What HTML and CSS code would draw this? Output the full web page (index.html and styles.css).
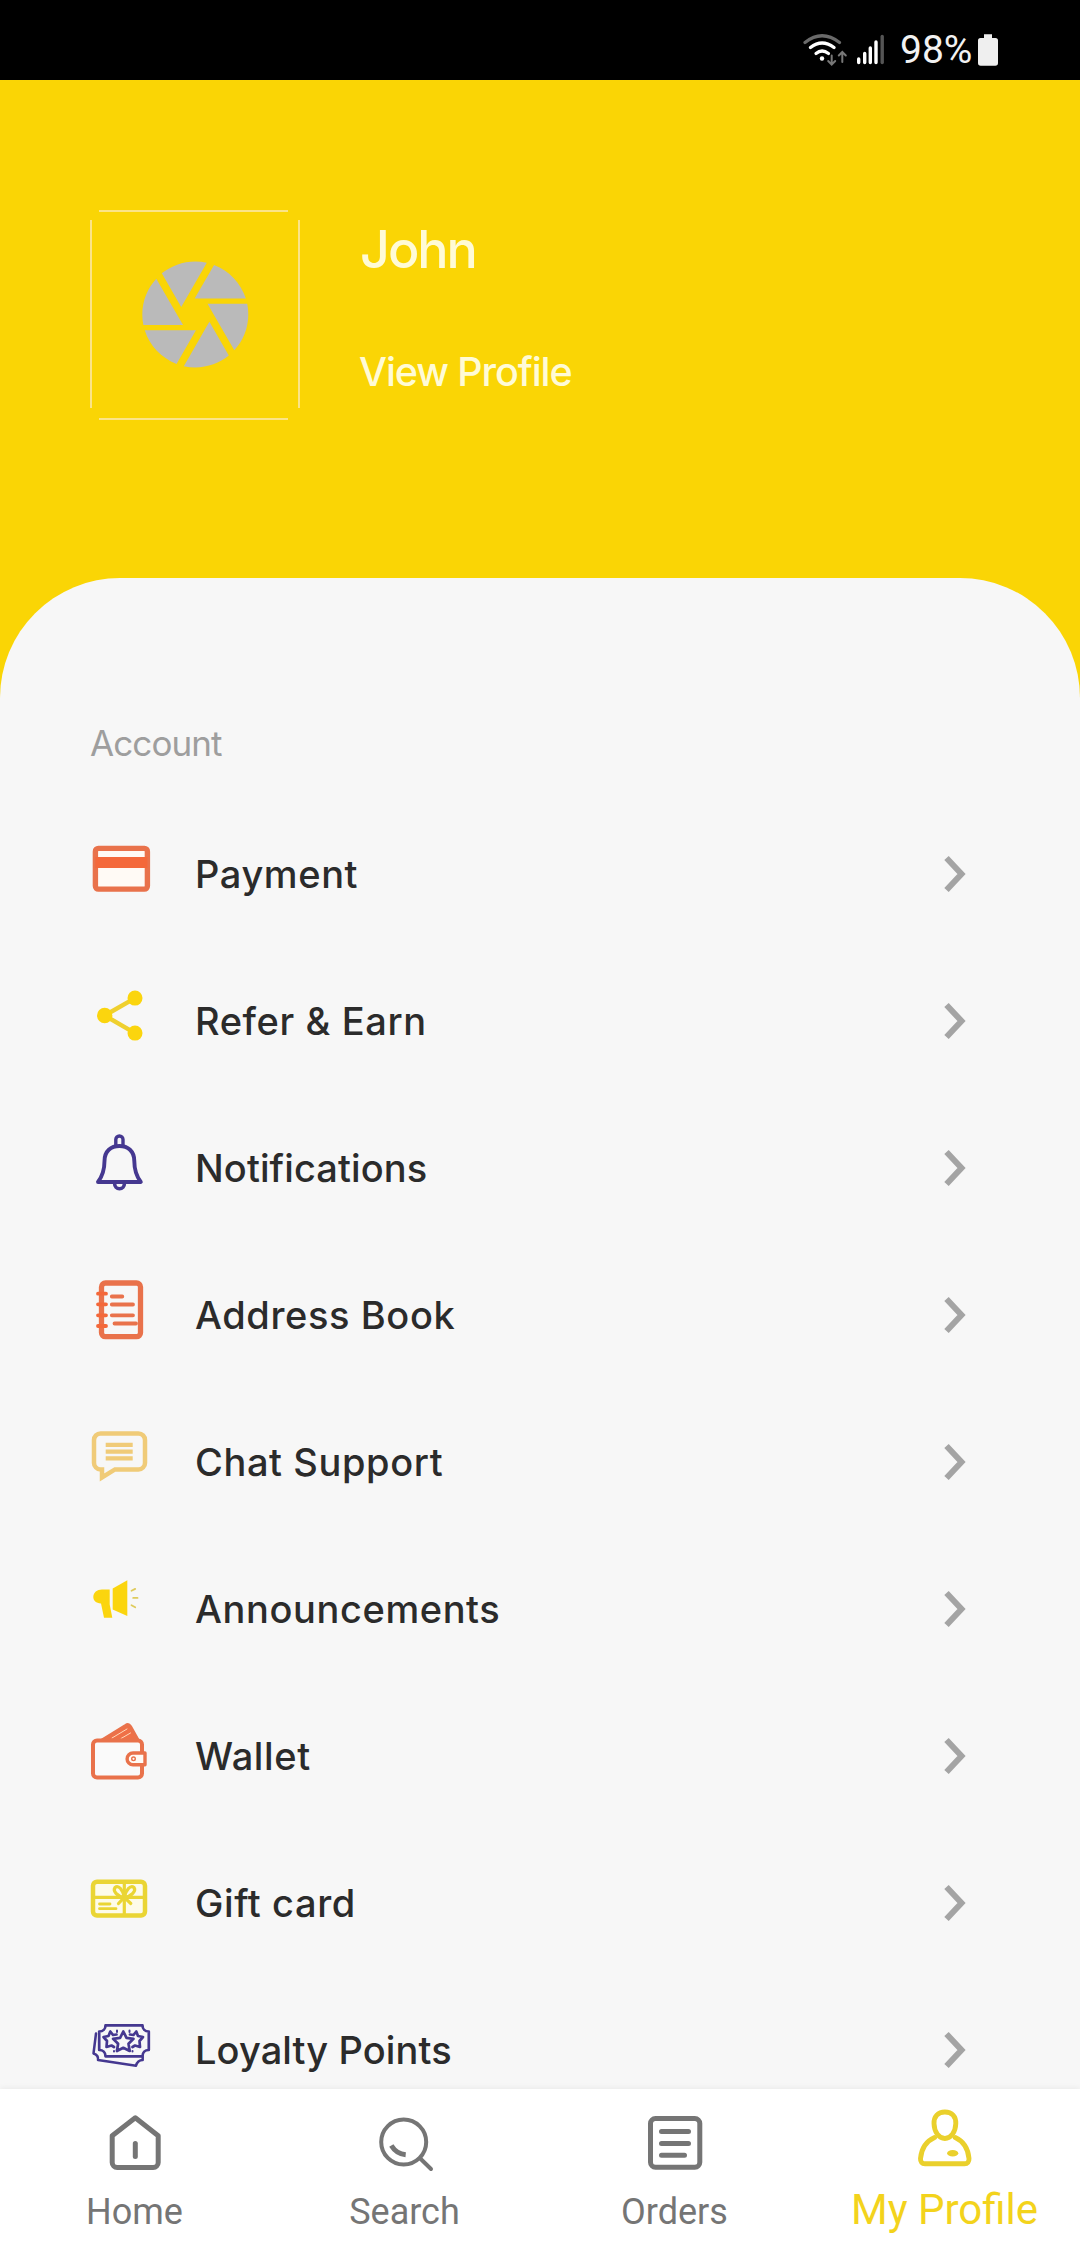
FILE: index.html
```
<!DOCTYPE html>
<html lang="en">

<head>
  <meta charset="UTF-8">
  <meta name="viewport" content="width=device-width, initial-scale=1.0">
  <title>My Profile</title>
  <link rel="stylesheet" href="styles.css">
</head>

<body>
  <div id="app">
    <div class="status-bar">
      <svg class="signal" viewBox="0 0 100 50" fill="none" stroke="#fff" stroke-linecap="round">
        <path d="M5 12.5Q22 -1 39.5 12.5" stroke="#6a6a6a" stroke-width="3.2" />
        <path d="M10.5 17.5Q22 8.5 34 17.5" stroke-width="3.4" />
        <path d="M16 23.5Q22 18.5 28.5 23.5" stroke-width="3.2" />
        <circle cx="22" cy="28.5" r="2.2" fill="#fff" stroke="none" />
        <path d="M31.7 25.5V34M28.2 31l3.5 3.5 3.5-3.5M42.3 32V22.5M38.8 25.5l3.5-3.5 3.5 3.5" stroke="#777" stroke-width="2" />
        <path d="M58.7 29V32.5M64.7 23.5V32.5M70.3 18V32.5M76 12V32.5" stroke-width="3.4" />
        <path d="M82.2 6.5V32.5" stroke="#555" stroke-width="3.4" />
      </svg>
      <span class="percent">98%</span>
      <svg class="battery" viewBox="0 0 20 50" fill="#efefef">
        <path d="M6 4.3h8V8h3.5a2.5 2.5 0 0 1 2.5 2.5V33a2.7 2.7 0 0 1-2.7 2.7H2.7A2.7 2.7 0 0 1 0 33V10.5A2.5 2.5 0 0 1 2.5 8H6z" />
      </svg>
    </div>

    <div class="header">
      <svg class="avatar" viewBox="0 0 210 210">
        <path d="M9 1H198M9 209H198M1 10V198M209 10V198" stroke="#fbe488" stroke-width="2" />
        <g transform="translate(41.7 40.8) scale(5.3)" fill="#bababa">
          <path d="M9.4 10.5l4.77-8.26C13.47 2.09 12.75 2 12 2c-2.4 0-4.6.85-6.32 2.25l3.66 6.35.06-.1zM21.54 9c-.92-2.92-3.15-5.26-6-6.34L11.88 9h9.66zm.26 1h-7.49l.29.5 4.76 8.25C21 16.97 22 14.61 22 12c0-.69-.07-1.35-.2-2zM8.54 12l-3.9-6.75C3.01 7.03 2 9.39 2 12c0 .69.07 1.35.2 2h7.49l-1.15-2zm-6.08 3c.92 2.92 3.15 5.26 6 6.34L12.12 15H2.46zm11.27 0l-3.9 6.76c.7.15 1.42.24 2.17.24 2.4 0 4.6-.85 6.32-2.25l-3.66-6.35-.93 1.6z" />
        </g>
      </svg>
      <div class="user">
        <div class="name">John</div>
        <div class="view">View Profile</div>
      </div>
    </div>

    <div class="sheet">
      <div class="section-title">Account</div>

      <div class="row">
        <svg class="icon orange" viewBox="0 0 70 70">
          <rect x="10.4" y="9.4" width="52" height="40.7" rx="3" fill="#fffaf5" stroke-width="5.4" />
          <path d="M10.4 23.5H62.4" stroke-width="11" stroke="#f4683a" stroke-linecap="butt" />
        </svg>
        <span class="label">Payment</span>
        <svg class="chevron" viewBox="0 0 24 40"><path d="M3.5 4L18.5 20L3.5 36" /></svg>
      </div>

      <div class="row">
        <svg class="icon yellow" viewBox="0 0 70 70">
          <path d="M50 12.1L19.7 29.5L50 47.1" stroke-width="4.4" />
          <g fill="#fbd50e" stroke="none">
            <circle cx="50" cy="12.1" r="7.5" />
            <circle cx="19.7" cy="29.5" r="7.7" />
            <circle cx="50" cy="47.1" r="7.5" />
          </g>
        </svg>
        <span class="label">Refer &amp; Earn</span>
        <svg class="chevron" viewBox="0 0 24 40"><path d="M3.5 4L18.5 20L3.5 36" /></svg>
      </div>

      <div class="row">
        <svg class="icon purple" viewBox="0 0 70 70" stroke-width="3.9">
          <path d="M13 49C17.5 43 19.5 36 19.5 28C19.5 18 26 13 34.4 13S49.3 18 49.3 28C49.3 36 51.3 43 55.8 49Z" />
          <path d="M30.8 12V6.6a3.6 3.6 0 0 1 7.2 0V12" stroke-width="3.4" />
          <path d="M29.6 50.5a4.9 5.3 0 0 0 9.8 0" stroke-width="3.6" />
        </svg>
        <span class="label tight">Notifications</span>
        <svg class="chevron" viewBox="0 0 24 40"><path d="M3.5 4L18.5 20L3.5 36" /></svg>
      </div>

      <div class="row">
        <svg class="icon orange" viewBox="0 0 70 70" stroke-width="3.8">
          <rect x="16.5" y="3" width="39" height="53.7" rx="4" stroke-width="5.3" />
          <path d="M13 13.7H21M13 24.3H21M13 35.3H21M13 46H21" stroke="#f4683a" />
          <path d="M26.8 16.5H37.3M26.8 24.5H48M26.8 35.3H48M29.5 43.5H51" />
        </svg>
        <span class="label">Address Book</span>
        <svg class="chevron" viewBox="0 0 24 40"><path d="M3.5 4L18.5 20L3.5 36" /></svg>
      </div>

      <div class="row">
        <svg class="icon sand" viewBox="0 0 70 70">
          <path d="M17 50.5V42.4H15.5A6.5 6.5 0 0 1 9 35.9V13a6.5 6.5 0 0 1 6.5-6.5H53.5A6.5 6.5 0 0 1 60 13V35.9A6.5 6.5 0 0 1 53.5 42.4H30Z" stroke-width="4.5" stroke-linejoin="miter" />
          <path d="M20.7 17.8H47.7M20.7 24.7H47.7M20.7 31.3H47.7" stroke-width="4.2" stroke-linecap="butt" />
        </svg>
        <span class="label">Chat Support</span>
        <svg class="chevron" viewBox="0 0 24 40"><path d="M3.5 4L18.5 20L3.5 36" /></svg>
      </div>

      <div class="row">
        <svg class="icon yellow" viewBox="0 0 70 70" stroke-width="1.8">
          <path d="M24.7 15.5V30.5L27.3 43.8H19L16 29.5C11 29 8.3 26.5 8.3 23C8.3 18.5 12 15.5 17 15.5Z" fill="#fbd50e" stroke="none" />
          <path d="M27.7 14.5L42.3 6.2V42L27.7 35.5Z" fill="#fbd50e" stroke="none" />
          <path d="M46.5 16.7L50.2 14.9M48.2 23.9H52.5M46.5 31.2L50.2 33.2" stroke="#dfcb5c" />
        </svg>
        <span class="label">Announcements</span>
        <svg class="chevron" viewBox="0 0 24 40"><path d="M3.5 4L18.5 20L3.5 36" /></svg>
      </div>

      <div class="row">
        <svg class="icon orange" viewBox="0 0 70 70">
          <path d="M17 19L40.5 4.5Q43.5 2.5 45.5 5.5L53 19Z" fill="#ef7047" stroke-width="3" />
          <path d="M27 17L42 8M36 17.5L45.5 12" stroke="#ffd9ba" stroke-width="1" />
          <rect x="8" y="19.6" width="49" height="36.8" rx="4" fill="#fafafa" stroke-width="4" />
          <path d="M60 32H48a5.9 5.9 0 0 0 0 11.8H60Z" fill="#fffaf5" stroke-width="3.4" />
          <circle cx="48.5" cy="37.8" r="1.8" stroke-width="1.4" />
        </svg>
        <span class="label">Wallet</span>
        <svg class="chevron" viewBox="0 0 24 40"><path d="M3.5 4L18.5 20L3.5 36" /></svg>
      </div>

      <div class="row">
        <svg class="icon gold" viewBox="0 0 70 70" stroke-width="3.2">
          <rect x="8" y="13.7" width="52" height="33.8" rx="4" fill="#fdfbe9" stroke-width="4.5" />
          <path d="M9 29.4H59M39.3 14V47" />
          <path d="M39.3 29.4C32 28.5 27.5 23 30 19.5C33.5 16.5 38 22 39.3 29.4C40.6 22 45.5 16.5 49 19.5C51.5 23 46.5 28.5 39.3 29.4ZM39.3 29.4L33.5 35.5M39.3 29.4L45.8 35.5" />
          <path d="M14.5 36H25M14.5 40.7H31" stroke-width="2.8" />
        </svg>
        <span class="label">Gift card</span>
        <svg class="chevron" viewBox="0 0 24 40"><path d="M3.5 4L18.5 20L3.5 36" /></svg>
      </div>

      <div class="row">
        <svg class="icon purple" viewBox="0 0 70 70" stroke-width="2.7">
          <path d="M20.5 10.4H57.5C57.5 14 60 16.5 63.8 16.5V35C60 35 57.5 37.5 57.5 41.3H20.5C20.5 37.5 18 35 14.2 35V16.5C18 16.5 20.5 14 20.5 10.4Z" />
          <path d="M11 18.5L8.5 38.5C11.5 39.5 13.5 42 13 45L51 50.8C52 47 54 45 57.7 45V42" stroke-width="2.5" />
          <path d="M38.3 16.5L41.5 22.8L48.5 23.8L43.5 28.8L44.7 36L38.3 32.8L31.9 36L33.1 28.8L28.1 23.8L35.1 22.8Z" />
          <path d="M31.5 19.5L28 20L25.3 16.5L23.5 21L18.5 22L22 26L21.5 32L26.5 30.5L29 32M45 19.5L48.5 20L51.3 16.5L53 21L58 22L54.5 26L55 32L50 30.5L47.5 32" />
          <path d="M32 15.5V17M44.5 15.5V17M29 36V36.5M47.5 36V36.5" stroke-width="2" />
        </svg>
        <span class="label tight">Loyalty Points</span>
        <svg class="chevron" viewBox="0 0 24 40"><path d="M3.5 4L18.5 20L3.5 36" /></svg>
      </div>
    </div>

    <div class="nav">
      <div class="tab">
        <svg viewBox="0 0 60 64" stroke-width="5">
          <path d="M30.3 7.8L53.2 25.7V52.5a5 5 0 0 1-5 5H12.2a5 5 0 0 1-5-5V25.7Z" />
          <path d="M30.3 33.5V46.5" />
        </svg>
        <span>Home</span>
      </div>
      <div class="tab">
        <svg viewBox="0 0 60 64" stroke-width="4">
          <circle cx="28.7" cy="32" r="22.5" />
          <path d="M45 48.3L56 59" />
          <path d="M16.3 35.5Q21.5 44 30.7 44.8" stroke-width="5" stroke-linecap="butt" />
        </svg>
        <span>Search</span>
      </div>
      <div class="tab">
        <svg viewBox="0 0 60 64" stroke-width="5">
          <rect x="5.5" y="8.5" width="49.3" height="48.7" rx="5" />
          <path d="M16.5 21.5H43.5M16.5 33.4H43.5M16.5 45.3H39.5" />
        </svg>
        <span>Orders</span>
      </div>
      <div class="tab active">
        <svg viewBox="0 0 60 64" stroke-width="4.9">
          <path d="M29.9 2C37 2 41 6.5 40.8 13.5C40.5 22 36 28.5 29.9 28.5S19.3 22 19 13.5C18.8 6.5 23 2 29.9 2Z" />
          <path d="M19.5 27.5C10.5 31.5 6.5 38 5.5 48.5C5.3 52 7 53.8 10 53.8H49.5C52.5 53.8 54.2 52 54 48.5C53 38 49 31.5 40.3 27.5" />
          <ellipse cx="37.7" cy="43.2" rx="5.6" ry="3.2" fill="#ead02c" stroke="none" />
        </svg>
        <span>My Profile</span>
      </div>
    </div>
  </div>
</body>

</html>
```
FILE: styles.css
```
body {
  margin: 0;
  background-color: #fad505;
  font-family: 'Inter', 'Liberation Sans', sans-serif;
}

#app {
  width: 1080px;
  height: 2250px;
  overflow: hidden;
  display: flex;
  flex-direction: column;
}

svg {
  display: block;
  flex-shrink: 0;
}

.status-bar {
  height: 80px;
  box-sizing: border-box;
  padding: 30px 0 0 800px;
  background-color: #000;
  display: flex;
  flex-shrink: 0;
}

.signal {
  width: 100px;
  height: 50px;
}

.percent {
  width: 78px;
  font-family: 'Roboto', sans-serif;
  font-size: 39px;
  line-height: 41px;
  color: #f2f2f2;
}

.battery {
  width: 20px;
  height: 50px;
}

/* profile header */
.header {
  height: 498px;
  box-sizing: border-box;
  padding: 130px 90px 0;
  display: flex;
  flex-shrink: 0;
  gap: 59px;
  color: #fffbd6;
}

.avatar {
  width: 210px;
  height: 210px;
}

.name {
  margin: 8px 0 0 1px;
  font-size: 52px;
  font-weight: 500;
  line-height: 64px;
  letter-spacing: -2px;
}

.view {
  margin-top: 66px;
  font-size: 39.5px;
  font-weight: 500;
  line-height: 48px;
  letter-spacing: -1.1px;
}

/* account list */
.sheet {
  flex: 1;
  min-height: 0;
  overflow: hidden;
  padding: 140px 85px 0;
  background-color: #f7f7f7;
  border-radius: 120px 120px 0 0;
}

.section-title {
  height: 50px;
  margin: 0 0 33px 5px;
  font-size: 35px;
  line-height: 50px;
  letter-spacing: -0.9px;
  color: #9e9e9e;
}

.row {
  height: 146.9px;
  display: flex;
  align-items: center;
}

.icon {
  width: 70px;
  height: 70px;
  fill: none;
  stroke-linecap: round;
  stroke-linejoin: round;
}

.orange {
  stroke: #e9724b;
}

.yellow {
  stroke: #efd02f;
}

.gold {
  stroke: #ead534;
}

.sand {
  stroke: #f0cb78;
}

.purple {
  stroke: #453890;
}

.label {
  flex: 1;
  padding-left: 40px;
  font-size: 38px;
  font-weight: 550;
  letter-spacing: 0.6px;
  color: #2b2b2b;
}

.tight {
  letter-spacing: 0.1px;
}

.chevron {
  width: 24px;
  height: 40px;
  margin-right: 28px;
  fill: none;
  stroke: #a4a4a4;
  stroke-width: 6;
}

/* bottom navigation */
.nav {
  position: relative;
  height: 161px;
  flex-shrink: 0;
  display: flex;
  background-color: #fff;
  box-shadow: 0 -1px 6px rgba(0, 0, 0, 0.06);
}

.tab {
  flex: 1;
  padding-top: 21px;
  display: flex;
  flex-direction: column;
  align-items: center;
  font-family: 'Roboto', sans-serif;
  font-size: 36px;
  line-height: 42px;
  color: #757575;
}

.tab svg {
  width: 60px;
  height: 64px;
  margin-bottom: 17px;
  overflow: visible;
  fill: none;
  stroke: #757575;
  stroke-linecap: round;
  stroke-linejoin: round;
}

.tab span {
  padding-right: 1px;
  white-space: nowrap;
}

.active {
  font-size: 42px;
  line-height: 38px;
  color: #f3d31c;
}

.active svg {
  stroke: #ead02c;
}
```
